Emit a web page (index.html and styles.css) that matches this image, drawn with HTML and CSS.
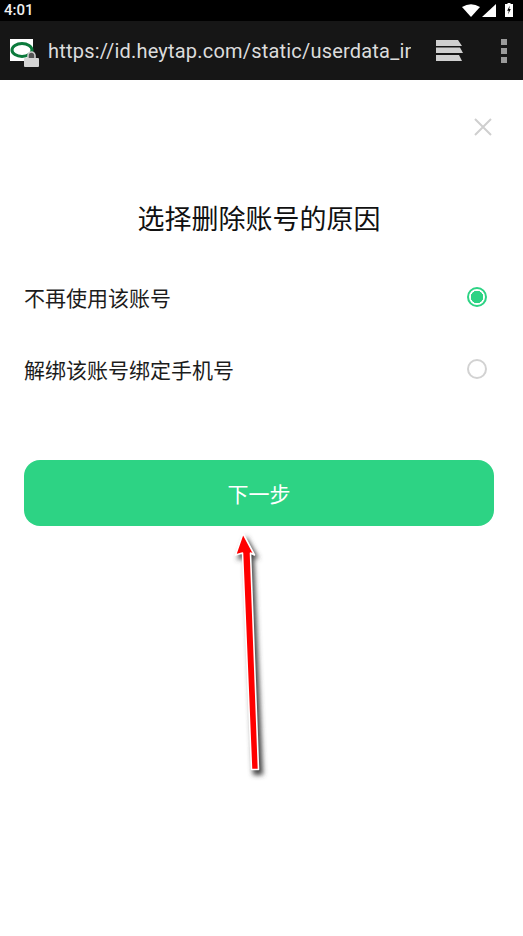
FILE: index.html
```html
<!DOCTYPE html>
<html lang="zh">
<head>
<meta charset="utf-8">
<title>选择删除账号的原因</title>
<link rel="stylesheet" href="styles.css">
</head>
<body>
<div class="status">
  <span class="time">4:01</span>
  <div class="status-icons">
    <svg class="ic-wifi" width="18" height="13" viewBox="0 0 18 13"><path d="M0 3Q9-2.500 18 3L9 13Z" fill="#fff"/></svg>
    <svg class="ic-signal" width="14" height="13" viewBox="0 0 14 13"><path d="M14 0V13H0Z" fill="#fff"/></svg>
    <svg class="ic-batt" width="8" height="14" viewBox="0 0 8 14"><path d="M2.500 0H5.500V1H8V14H0V1H2.500Z" fill="#fff"/><path d="M4.800 2.500 2.200 7.800H3.800L3 11.500 5.800 6H4.200Z" fill="#000"/></svg>
  </div>
</div>
<header class="toolbar">
  <div class="site-icon">
    <svg width="30" height="29" viewBox="0 0 30 29">
      <rect x="0" y="0" width="23" height="22" fill="#fff"/>
      <ellipse cx="12" cy="11" rx="10" ry="6.500" fill="none" stroke="#0c7a3c" stroke-width="3"/>
      <path d="M18 19V16.500a3.500 3.500 0 0 1 7 0V19" fill="#555" stroke="#ccc" stroke-width="1.600"/>
      <rect x="14" y="19" width="15" height="9" rx="1" fill="#d4d4d4"/>
    </svg>
  </div>
  <div class="url">https://id.heytap.com/static/userdata_ir</div>
  <svg class="ic-tabs" width="27" height="22" viewBox="0 0 27 22"><path d="M0 0H22L26 6H0Z" fill="#cfcfcf"/><path d="M0 7.500H24L27 13H0Z" fill="#cfcfcf"/><path d="M0 15H23L26 21H0Z" fill="#cfcfcf"/></svg>
  <div class="menu"><i></i><i></i><i></i></div>
</header>
<main class="page">
  <div class="close-row">
    <svg width="20" height="20" viewBox="0 0 20 20"><path d="M2 2 18 18M18 2 2 18" stroke="#cfcfcf" stroke-width="2" fill="none"/></svg>
  </div>
  <h1 class="title">选择删除账号的原因</h1>
  <div class="options">
    <div class="option"><span>不再使用该账号</span><span class="radio on"></span></div>
    <div class="option"><span>解绑该账号绑定手机号</span><span class="radio"></span></div>
  </div>
  <button class="next">下一步</button>
</main>
<svg class="arrow" width="60" height="260" viewBox="0 0 60 260">
  <defs><filter id="sh" x="-50%" y="-10%" width="200%" height="120%"><feGaussianBlur stdDeviation="2.500"/></filter></defs>
  <path d="M23 4 36 27 31 26 40 243H30L22 26 14 28Z" fill="#444" filter="url(#sh)" transform="translate(3 3)"/>
  <path d="M23 4.500 34.500 26 30.500 24 38.500 240.500H31.500L22.500 24 15.500 26Z" fill="#f00" stroke="#fff" stroke-width="1.600" stroke-linejoin="round"/>
</svg>
</body>
</html>
```
FILE: styles.css
```css
* { box-sizing: border-box; }
html, body { margin: 0; padding: 0; }
body {
  width: 523px;
  height: 936px;
  overflow: hidden;
  background: #fff;
  position: relative;
  font-family: "Noto Sans CJK SC", "Liberation Sans", sans-serif;
  color: #111;
}
.status {
  height: 21px;
  background: #000;
  display: flex;
  align-items: center;
  justify-content: space-between;
  padding: 0 10px 0 4px;
}
.time {
  font-family: Roboto, sans-serif;
  font-size: 15px;
  font-weight: 500;
  color: #f0f0f0;
  line-height: 15px;
}
.status-icons { display: flex; align-items: flex-start; gap: 2px; height: 15px; }
.status-icons svg { display: block; }
.ic-wifi, .ic-signal { margin-top: 1px; }
.ic-batt { margin-left: 7px; }
.toolbar {
  height: 59px;
  background: #161616;
  display: flex;
  align-items: center;
  padding-left: 10px;
}
.site-icon { width: 38px; height: 29px; margin-top: 5px; }
.site-icon svg { display: block; }
.url {
  width: 363px;
  font-family: Roboto, sans-serif;
  font-size: 20px;
  letter-spacing: 0.2px;
  color: #dcdcdc;
  white-space: nowrap;
  overflow: hidden;
}
.ic-tabs { margin-left: 25px; }
.menu {
  margin-left: 38px;
  display: flex;
  flex-direction: column;
  gap: 3px;
}
.menu i { display: block; width: 6px; height: 6px; background: #9a9a9a; }
.page { padding: 0 29px 0 24px; }
.close-row {
  display: flex;
  justify-content: flex-end;
  padding: 37px 1px 0 0;
  height: 57px;
}
.close-row svg { display: block; }
.title {
  margin: 63px 0 0;
  text-align: center;
  font-size: 27px;
  font-weight: 400;
  line-height: 36px;
  color: #111;
}
.options { margin-top: 25px; }
.option {
  height: 72px;
  display: flex;
  align-items: center;
  justify-content: space-between;
  font-size: 21px;
  color: #1c1c1c;
}
.radio {
  width: 20px;
  height: 20px;
  border-radius: 50%;
  border: 2px solid #d2d2d2;
  background: #fff;
  margin-right: 7px;
}
.radio.on {
  border-color: #2dd384;
  background: radial-gradient(circle, #2dd384 0 6px, #fff 6.500px);
}
.next {
  display: block;
  width: 470px;
  height: 66px;
  margin: 55px 0 0;
  border: 0;
  border-radius: 16px;
  background: #2dd384;
  color: #fff;
  font-family: inherit;
  font-size: 21px;
  padding: 0;
}
.arrow {
  position: absolute;
  left: 220px;
  top: 529px;
}
```
